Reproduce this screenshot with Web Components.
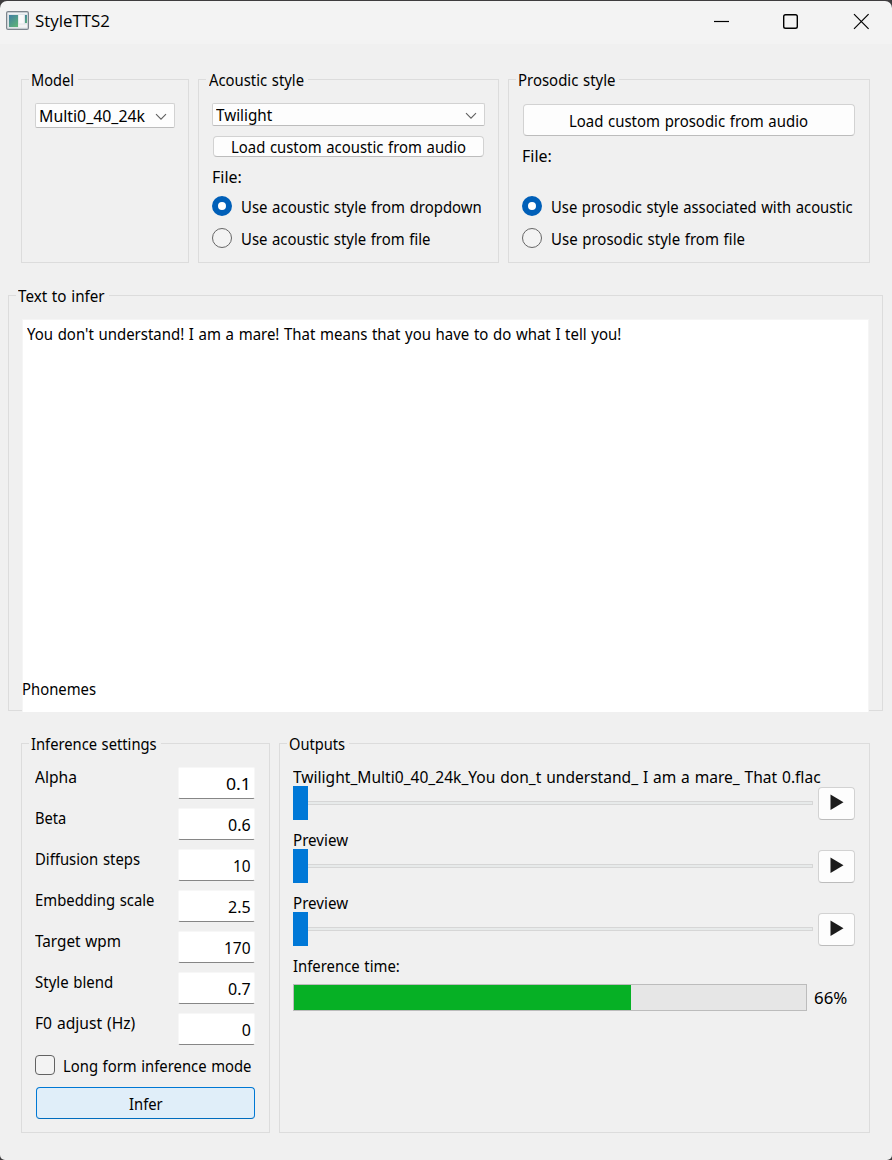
<!DOCTYPE html>
<html lang="en">
<head>
<meta charset="utf-8">
<title>StyleTTS2</title>
<style>
html,body{margin:0;padding:0;background:#3e3c3e}
body{width:892px;height:1160px;overflow:hidden;font:16px/20px "Noto Sans","Open Sans",sans-serif;color:#000}
</style>
</head>
<body>
<tts-app></tts-app>
<script>
function define(name, html, setup) {
  const t = document.createElement('template');
  t.innerHTML = html;
  customElements.define(name, class extends HTMLElement {
    connectedCallback() {
      if (this.shadowRoot) return;
      this.attachShadow({mode: 'open'}).appendChild(t.content.cloneNode(true));
      if (setup) setup(this, this.shadowRoot);
    }
  });
}
const ctx = document.createElement('canvas').getContext('2d');

// Label condensed horizontally so that its glyphs span the given width.
define('ui-label', `<style>:host{display:block;white-space:pre;height:20px;line-height:20px;flex:none;width:max-content;word-spacing:.8px;transform-origin:0 0}</style><slot></slot>`, host => {
  const w = parseFloat(host.getAttribute('w'));
  const s = host.textContent;
  if (!w) return;
  const cs = getComputedStyle(host);
  ctx.font = cs.fontSize + ' ' + cs.fontFamily;
  const m = ctx.measureText(s);
  const extra = (s.split(' ').length - 1) * .8;
  const k = w / (m.actualBoundingBoxRight + m.actualBoundingBoxLeft + extra);
  host.style.transform = 'scaleX(' + k.toFixed(4) + ')';
  host.style.marginRight = ((m.width + extra) * (k - 1)).toFixed(3) + 'px';
});

define('ui-group', `<style>
:host{display:flex;flex-direction:column;align-items:stretch;box-sizing:border-box;border:1px solid #dcdcdc;flex:none}
.legend{align-self:flex-start;margin:-10px 0 0 7px;padding:0 4px 0 2px;background:#f0f0f0}
.body{display:flex;flex-direction:column;flex:1;min-height:0}
</style><div class="legend"><slot name="legend"></slot></div><div class="body"><slot></slot></div>`);

define('ui-combo', `<style>
:host{display:flex;justify-content:space-between;box-sizing:border-box;border:1px solid #d2d2d2;border-bottom-color:#bcbcbc;border-radius:2px;background:#fdfdfd;padding:0 7px 0 3px;flex:none}
svg{flex:none;margin-top:7px}
</style><slot></slot><svg width="12" height="8" viewBox="0 0 12 8"><path d="M1 1.200 6 6.200 11 1.200" fill="none" stroke="#606060" stroke-width="1.1"/></svg>`);

define('ui-button', `<style>
:host{display:flex;justify-content:center;box-sizing:border-box;border:1px solid #d2d2d2;border-bottom-color:#bcbcbc;border-radius:4px;background:#fdfdfd;flex:none}
:host([primary]){border-color:#0078d4;border-bottom-color:#006cbe;background:#e0eef9}
</style><slot></slot>`);

define('ui-radio', `<style>
:host{display:flex;height:32px;gap:9px;flex:none}
i{box-sizing:border-box;width:20px;height:20px;border:1px solid #666;border-radius:50%;background:#f3f3f3;flex:none}
:host([checked]) i{border:6px solid #005fb8;background:#fff}
slot{display:block;padding-top:1px}
</style><i></i><slot></slot>`);

define('ui-check', `<style>
:host{display:flex;gap:7.5px;height:20px;flex:none}
i{box-sizing:border-box;width:20px;height:20px;border:1px solid #626262;border-radius:4px;background:#f3f3f3;flex:none}
slot{display:block;padding-top:1px}
</style><i></i><slot></slot>`);

define('ui-field', `<style>
:host{display:flex;justify-content:space-between;height:41px;flex:none}
.in{box-sizing:border-box;width:77px;height:32px;background:#fff;border:1px solid #f7f7f7;border-bottom:1px solid #868686;border-radius:2px;display:flex;justify-content:flex-end;padding:6px 3px 0 0}
</style><slot></slot><div class="in"><slot name="value"></slot></div>`);

define('ui-player', `<style>
:host{display:block;height:63px;flex:none}
.row{display:flex;height:34px;margin-top:-1px}
.thumb{width:15px;height:34px;background:#0078d7}
.track{box-sizing:border-box;width:505px;height:4px;margin:15px 5px 0 0;border:1px solid #d6d6d6;border-left:0;background:#e7eaea}
ui-button{width:37px;height:33px;margin-top:1px}
svg{display:block;margin-top:5px}
</style><slot></slot><div class="row"><div class="thumb"></div><div class="track"></div><ui-button><svg width="14" height="18" viewBox="0 0 14 18"><path d="M.5 1.500v15.500L13.500 9.200z" fill="#1b1b1b"/></svg></ui-button></div>`);

define('ui-progress', `<style>
:host{display:flex;height:27px;flex:none}
.bar{box-sizing:border-box;width:514px;height:27px;border:1px solid #bcbcbc;background:#e6e6e6}
.fill{height:100%;width:337px;background:#06b025}
slot{display:block;padding:4px 0 0 6.5px}
</style><div class="bar"><div class="fill"></div></div><slot></slot>`);

define('ui-titlebar', `<style>
:host{display:flex;box-sizing:border-box;height:44px;border-top:1px solid #3e3c3e;background:#3e3c3e;flex:none}
.bar{flex:1;display:flex;background:#f3f3f3;border-radius:7px 7px 0 0;padding-left:6px}
svg{display:block;flex:none}
ui-label{margin-top:10px}
.caps{display:flex;margin-left:auto}
</style><div class="bar">
<svg width="24" height="42" viewBox="0 0 24 42"><defs><linearGradient id="g" x1="0" y1="0" x2=".7" y2="1"><stop offset="0" stop-color="#3f7da3"/><stop offset="1" stop-color="#5cb07a"/></linearGradient></defs><rect x=".6" y="10.600" width="21.800" height="17.800" rx="1.5" fill="#dfe5e8" stroke="#7d858d" stroke-width="1.2"/><path d="M2 12.500h19" stroke="#eef2f5"/><path d="M3 14h9v12H3z" fill="url(#g)"/><path d="M12.800 14h5v8.500h-5z" fill="#fafafa"/><path d="M19 14h2v8h-2z" fill="url(#g)"/><path d="M12.500 23.500h8.500v3h-8.500z" fill="#f4f4f4"/></svg>
<ui-label w="74.500" style="margin-left:5px;font-family:'Open Sans','Noto Sans',sans-serif;font-size:16.500px">StyleTTS2</ui-label>
<div class="caps"><svg width="182" height="42" viewBox="0 0 182 42" fill="none" stroke="#000"><path d="M4 20.500h15" stroke-width="1.2"/><rect x="73.700" y="13.700" width="13.600" height="13.600" rx="1.8" stroke-width="1.4"/><path d="M144 13.200 158.600 27.800M158.600 13.200 144 27.800" stroke-width="1.2"/></svg></div></div>`);

define('tts-app', `<style>
:host{display:flex;flex-direction:column;width:892px;height:1160px;background:#f0f0f0;overflow:hidden;border-radius:0 0 5px 5px}
.row{display:flex}
.top{margin:35px 0 0 21px;height:184px}
.top ui-group{height:184px}
.edit{display:flex;flex-direction:column;justify-content:space-between;box-sizing:border-box;width:847px;height:393px;margin:13px 0 -2px 13px;background:#fff;border:1px solid #f5f5f5;border-width:1px 1px 0;padding:4px 0 7px}
.bottom{margin:32px 0 0 21px;height:390px}
.bottom ui-group{height:390px}
</style>
<ui-titlebar></ui-titlebar>
<div class="row top">
 <ui-group style="width:168px"><ui-label slot="legend" w="41">Model</ui-label>
  <ui-combo style="width:140px;height:25px;margin:13px 0 0 13px;padding-top:2px;padding-left:2.500px"><ui-label w="105.500">Multi0_40_24k</ui-label></ui-combo>
 </ui-group>
 <ui-group style="width:301px;margin-left:9px"><ui-label slot="legend" w="95" style="margin-left:.5px">Acoustic style</ui-label>
  <ui-combo style="width:273px;height:23px;margin:13px 0 0 13px;padding-top:1px"><ui-label w="56.500">Twilight</ui-label></ui-combo>
  <ui-button style="width:271px;height:21px;margin:10px 0 0 14px"><ui-label w="233.500">Load custom acoustic from audio</ui-label></ui-button>
  <ui-label w="28.500" style="margin:10px 0 9px 12.500px">File:</ui-label>
  <ui-radio checked style="margin-left:13px"><ui-label w="239">Use acoustic style from dropdown</ui-label></ui-radio>
  <ui-radio style="margin-left:13px"><ui-label w="188.500">Use acoustic style from file</ui-label></ui-radio>
 </ui-group>
 <ui-group style="width:362px;margin-left:9px"><ui-label slot="legend" w="96.500" style="margin-left:-.5px">Prosodic style</ui-label>
  <ui-button style="width:332px;height:32px;margin:14px 0 0 14px;padding-top:6px"><ui-label w="237.500">Load custom prosodic from audio</ui-label></ui-button>
  <ui-label w="28.500" style="margin:10px 0 30px 12.500px">File:</ui-label>
  <ui-radio checked style="margin-left:13px"><ui-label w="301">Use prosodic style associated with acoustic</ui-label></ui-radio>
  <ui-radio style="margin-left:13px"><ui-label w="193">Use prosodic style from file</ui-label></ui-radio>
 </ui-group>
</div>
<ui-group style="width:875px;height:416px;margin:32px 0 0 8px"><ui-label slot="legend" w="87">Text to infer</ui-label>
 <div class="edit"><ui-label w="594" style="margin-left:4px">You don't understand! I am a mare! That means that you have to do what I tell you!</ui-label><ui-label w="72.500" style="margin-left:-1.500px;padding-bottom:6px">Phonemes</ui-label></div>
</ui-group>
<div class="row bottom">
 <ui-group style="width:249px"><ui-label slot="legend" w="125">Inference settings</ui-label>
  <div id="fields" style="margin:13px 14px 0 12.700px"></div>
  <ui-check style="margin:1px 0 0 13px"><ui-label w="187.500">Long form inference mode</ui-label></ui-check>
  <ui-button primary style="width:219px;height:32px;margin:12px 0 0 14px;padding-top:6px"><ui-label w="34">Infer</ui-label></ui-button>
 </ui-group>
 <ui-group style="width:591px;margin-left:9px"><ui-label slot="legend" w="55.500">Outputs</ui-label>
  <div style="margin:13px 0 0 13px">
   <ui-player><ui-label w="528">Twilight_Multi0_40_24k_You don_t understand_ I am a mare_ That 0.flac</ui-label></ui-player>
   <ui-player><ui-label w="54.500" style="margin-left:-.5px">Preview</ui-label></ui-player>
   <ui-player><ui-label w="54.500" style="margin-left:-.5px">Preview</ui-label></ui-player>
   <ui-label w="106.500">Inference time:</ui-label>
   <ui-progress style="margin-top:8px"><ui-label w="33">66%</ui-label></ui-progress>
  </div>
 </ui-group>
</div>`, (host, root) => {
  root.getElementById('fields').innerHTML = [
    ['Alpha', 41, '0.1', 21.5], ['Beta', 29.5, '0.6', 22.5], ['Diffusion steps', 103.5, '10', 16.5],
    ['Embedding scale', 118.5, '2.5', 22.5], ['Target wpm', 85, '170', 25.5],
    ['Style blend', 77.5, '0.7', 22.5], ['F0 adjust (Hz)', 99.5, '0', 0]
  ].map(([n, w, v, vw]) => `<ui-field><ui-label w="${w}">${n}</ui-label><ui-label slot="value" w="${vw}">${v}</ui-label></ui-field>`).join('');
});
</script>
</body>
</html>
